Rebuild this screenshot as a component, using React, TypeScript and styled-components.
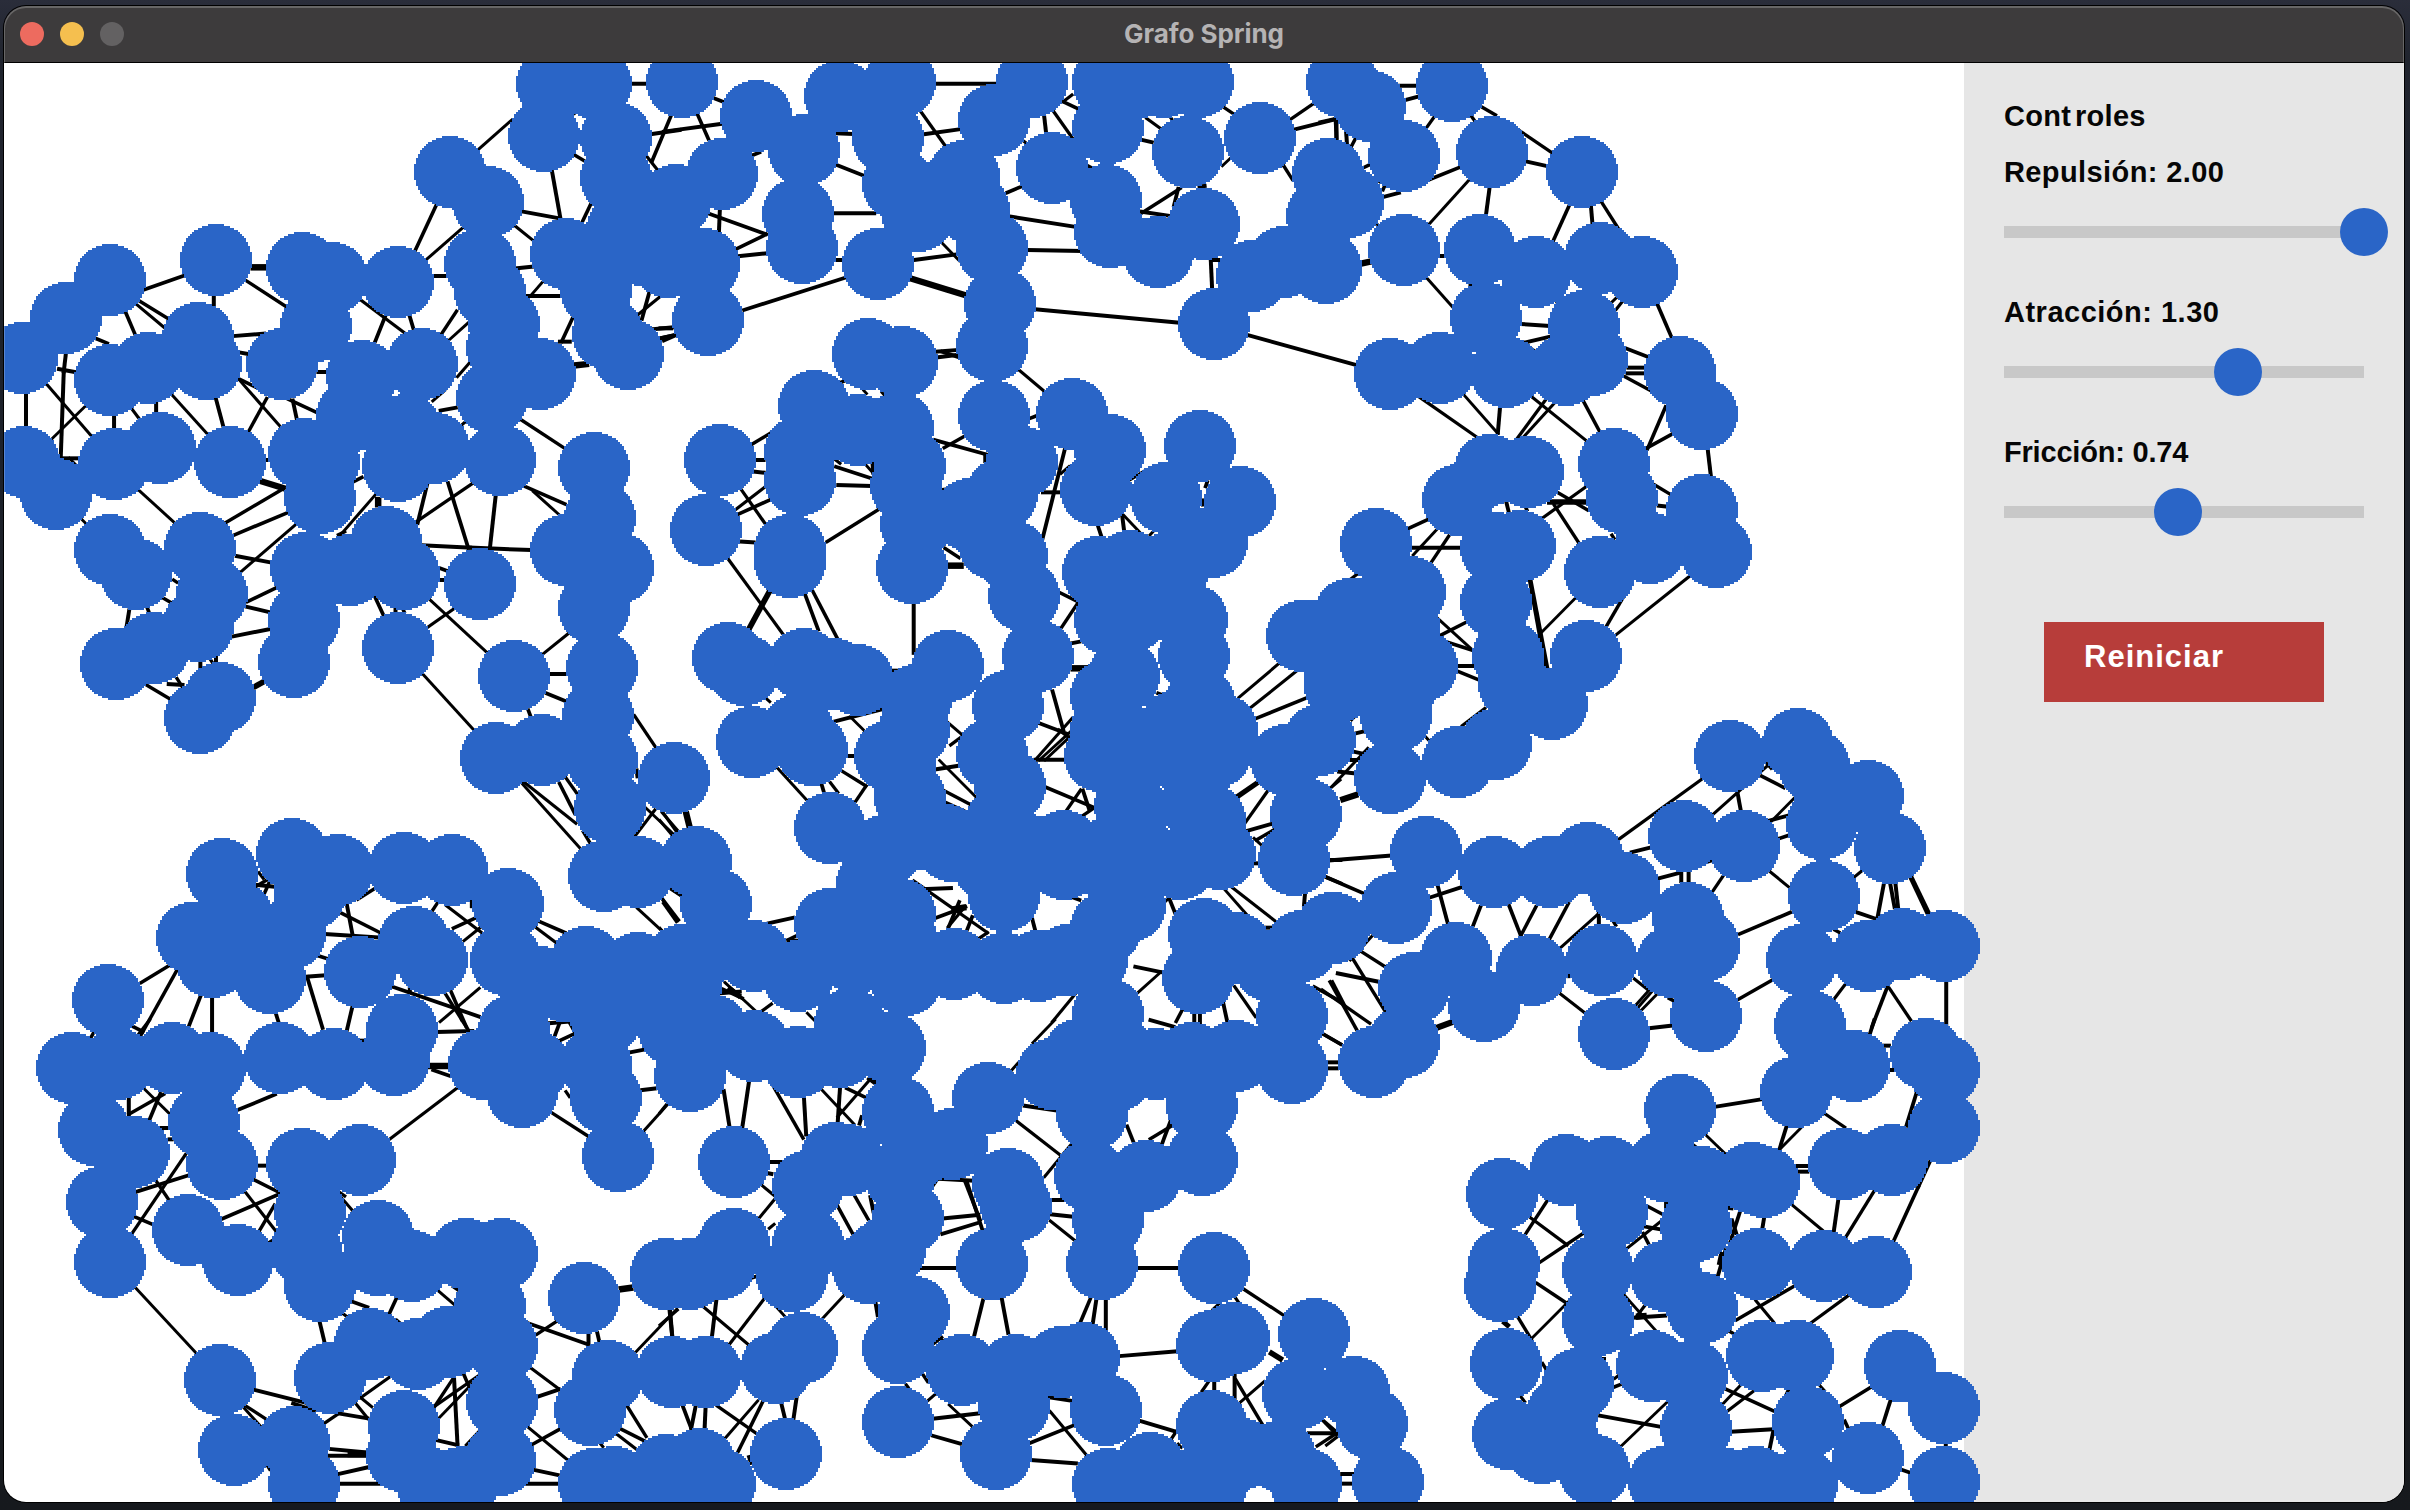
import React from 'react';
import styled, { createGlobalStyle } from 'styled-components';

const BLUE = '#2a65c7';

const GlobalStyle = createGlobalStyle`
  * { box-sizing: border-box; }
  html, body { margin: 0; padding: 0; }
  body {
    width: 2410px;
    height: 1510px;
    overflow: hidden;
    background: #1a1f27;
    font-family: "Liberation Sans", Arial, sans-serif;
  }
`;

const Desktop = styled.div`
  width: 2410px;
  height: 1510px;
  padding: 6px 6px 8px 4px;
  background: linear-gradient(180deg, #2a2d3a 0px, #20242e 60px, #1a1f27 50%, #16191d 100%);
`;

const Window = styled.div`
  position: relative;
  width: 2400px;
  height: 1496px;
  border-radius: 22px;
  overflow: hidden;
  display: flex;
  flex-direction: column;
  box-shadow: 0 0 0 1px #000;

  &::after {
    content: '';
    position: absolute;
    inset: 0;
    border-radius: 22px;
    box-shadow: inset 0 1px 0 1px rgba(255, 255, 255, 0.22);
    pointer-events: none;
    z-index: 3;
  }
`;

const TitleBar = styled.header`
  height: 57px;
  flex: none;
  display: grid;
  grid-template-columns: 200px 1fr 200px;
  align-items: center;
  background: #3d3b3c;
  border-bottom: 1px solid #000;
`;

const Lights = styled.div`
  display: flex;
  gap: 16px;
  padding-left: 16px;
`;

const Light = styled.span<{ $color: string }>`
  width: 24px;
  height: 24px;
  border-radius: 50%;
  background: ${(p) => p.$color};
`;

const Title = styled.h1`
  margin: 0;
  text-align: center;
  font: 700 26px/32px Inter, "Liberation Sans", sans-serif;
  letter-spacing: -0.05px;
  color: #b5b3b4;
  padding-bottom: 1px;
`;

const Body = styled.main`
  display: flex;
  flex: 1;
  min-height: 0;
  overflow: hidden;
  background: #fff;
`;

const Graph = styled.svg`
  display: block;
  position: relative;
  z-index: 2;
  flex: none;
  width: 1960px;
  height: 1439px;
  overflow: visible;
`;

const Panel = styled.aside`
  flex: 1;
  display: flex;
  flex-direction: column;
  align-items: flex-start;
  padding: 33px 0 0 40px;
  background: #e6e6e6;
`;

const Heading = styled.h2`
  margin: 0 0 16px;
  font-size: 29px;
  line-height: 40px;
  font-weight: 700;
  letter-spacing: 0.3px;
  color: #060606;
`;

const Kern = styled.span<{ $after: number }>`
  letter-spacing: ${(p) => p.$after}px;
`;

const Control = styled.div`
  height: 140px;
`;

const Label = styled.div<{ $spacing: number }>`
  font-size: 29px;
  line-height: 40px;
  font-weight: 700;
  letter-spacing: ${(p) => p.$spacing}px;
  color: #060606;
  white-space: pre;
`;

const Slider = styled.div`
  display: flex;
  align-items: center;
  width: 360px;
  height: 48px;
  margin-top: 16px;
  background: linear-gradient(#c8c8c8, #c8c8c8) center / 100% 12px no-repeat;
`;

const Knob = styled.span`
  flex: none;
  width: 48px;
  height: 48px;
  border-radius: 50%;
  background: ${BLUE};
`;

const ResetButton = styled.button`
  display: flex;
  align-items: flex-start;
  width: 280px;
  height: 80px;
  margin: 50px 0 0 40px;
  padding: 17px 0 0 40px;
  border: 0;
  border-radius: 0;
  background: #b73d3a;
  color: #fff;
  font: 700 31px/36px "Liberation Sans", Arial, sans-serif;
  letter-spacing: 1px;
`;

type Sector = { x: number; y: number; nodes: number[]; edges: number[]; bold: number[] };

const UNIT_X = 680 / 1568;
const UNIT_Y = 1 / 3;

// the scene is a 980x720 grid shown at double size
const CELL = 2;
const CELLS_PER_RADIUS = 18;

const sectors: Sector[] = [
  {
    x: 0, y: 50,
    nodes: [
      1273,101, 1374,101, 1254,258, 1422,265, 1421,385, 1432,540, 1305,611, 1540,637, 1374,720, 1400,850, 1448,912,
      1573,95, 1037,365, 1126,455, 1107,640, 1131,728, 1158,895, 1245,972, 1134,1045, 1153,1228, 1371,1253, 1384,1405,
      253,689, 152,803, 53,923, 498,629, 695,653, 765,683, 917,695, 729,827, 650,942, 457,864, 475,942, 340,953,
      255,990, 835,978, 972,942, 813,1100, 1000,1192, 917,1247, 938,1138, 702,1211, 738,1345, 745,1235, 530,1235,
      367,1193, 263,1241, 56,1235, 130,1332, 1480,600, 1160,820,
    ],
    edges: [
      1457,101,1490,101, 1180,210,1100,302, 1318,183,1325,190, 1325,315,1347,332, 1273,365,1292,503, 1206,485,1290,505,
      1187,527,1230,572, 1363,460,1343,515, 1503,252,1568,240, 1548,195,1503,335, 1492,320,1515,358, 1006,465,958,600,
      1070,530,982,630, 1002,678,1028,678, 1190,655,1228,650, 1215,738,1295,738, 1255,690,1225,735, 1320,805,1295,875,
      1290,875,1315,875, 1453,690,1467,680, 1497,728,1480,808, 1522,740,1470,795, 1503,838,1550,832,
      1522,865,1558,855, 1530,872,1555,858, 330,720,422,678, 565,690,660,770, 493,738,493,768, 318,750,388,806,
      312,760,378,832, 290,788,311,852, 220,865,248,880, 540,858,610,851, 152,910,147,965, 147,965,140,1225,
      140,1225,182,1225, 135,957,172,966, 60,1030,60,1130, 108,1003,212,1160, 197,1068,117,1170, 263,1098,263,1135,
      303,1075,322,1108, 360,1060,360,1087, 395,1032,480,1155, 498,1047,515,1130, 552,990,648,1132, 548,985,595,1015,
      615,1045,573,1145, 665,1048,728,1086, 675,1050,684,1105, 555,908,572,912, 733,966,752,966, 830,748,932,848,
      888,800,865,875, 945,800,953,835, 1053,783,1018,852, 1080,818,1033,873, 1083,938,1055,980, 1025,1022,998,1053,
      1015,1082,1052,1073, 1078,1110,1060,1130, 1200,1108,1302,1195, 1208,1308,1303,1362, 1230,1325,1290,1395,
      1143,1337,1130,1490, 1033,1298,1080,1495, 985,1303,963,1420, 1092,1298,960,1415, 815,1295,835,1282,
      865,1335,785,1455, 655,1315,520,1418, 663,1388,540,1455, 683,1422,550,1572, 318,1318,404,1420, 186,1405,203,1427,
      613,1230,620,1230, 160,1225,175,1245,
    ],
    bold: [581,652,612,652, 1327,946,1355,942, 872,1345,872,1368, 600,1293,655,1315],
  },
  {
    x: 660, y: 50,
    nodes: [
      221,197, 332,300, 143,372, 35,450, 100,641, 110,809, 414,140, 553,95, 524,266, 320,490, 327,594, 503,641, 550,400,
      595,499, 860,95, 770,209, 702,377, 725,480, 766,594, 784,761, 766,886, 770,1097, 903,354, 1032,95, 1105,95,
      1160,95, 1240,95, 1034,234, 1217,305, 1384,264, 1028,450, 1038,546, 1150,606, 1254,521, 1277,822, 1365,678,
      1440,635, 1535,653, 1542,372, 1527,500, 1573,95, 480,912, 558,936, 548,1136, 355,1068, 455,1140, 323,1205,
      323,1288, 575,1245, 567,1310, 590,1420, 137,1229, 105,1439, 300,1500, 950,1091, 1038,1200, 1004,1318, 833,1235,
      788,1330, 713,1400, 1245,1187, 1168,1343, 1337,1355, 1274,1475, 1083,1548, 1010,1565, 640,440,
    ],
    edges: [
      125,145,145,155, 8,245,140,222, 87,195,112,268, 215,315,230,307, 408,250,443,252, 408,345,470,377,
      636,101,780,101, 600,182,658,288, 612,252,690,238, 138,480,136,543, 115,492,245,553, 245,553,177,596,
      183,618,245,610, 402,490,495,490, 405,630,420,630, 585,630,685,613, 645,572,690,632, 193,780,427,683,
      800,428,833,410, 835,270,848,283, 886,200,890,245, 908,185,953,268, 930,155,965,177, 950,135,930,155,
      1170,190,1180,207, 1122,205,1157,238, 1112,270,1135,277, 1298,170,1323,192, 1455,207,1508,160, 1465,238,1560,207,
      1558,207,1560,265, 1315,325,1297,347, 1437,345,1458,388, 1243,410,1257,408, 1200,415,1112,488, 1195,415,1185,467,
      1110,485,1172,497, 810,500,955,530, 850,600,970,603, 868,778,1195,818, 1270,630,1273,713, 1272,630,1290,630,
      1355,855,1605,945, 638,905,685,900, 640,922,685,915, 650,905,685,920, 825,957,888,1026, 0,835,27,835,
      0,865,35,855, 415,998,427,992, 470,1022,476,1030, 512,1028,517,1035, 853,1105,867,1098, 213,1182,277,1132,
      222,1230,240,1230, 218,1265,240,1268, 633,1170,752,1213, 703,1158,655,1193, 750,1213,750,1235, 405,1250,487,1285,
      410,1305,485,1308, 475,1245,492,1270, 490,1240,492,1270, 405,1230,415,1240, 650,1320,660,1318, 187,1318,243,1422,
      240,1313,175,1378, 253,1350,180,1393, 502,1380,385,1475, 933,1200,880,1477, 882,1327,925,1327, 943,1250,925,1270,
      1115,1265,1085,1288, 1010,1428,1018,1460, 1065,1390,1105,1445, 1065,1390,1070,1440, 1130,1455,1137,1445,
      1262,1295,1258,1310, 1250,1350,1252,1365, 983,345,993,352,
    ],
    bold: [580,686,703,735],
  },
  {
    x: 1320, y: 50,
    nodes: [
      114,168, 304,107, 194,318, 396,305, 604,365, 65,455, 194,600, 370,600, 497,666, 645,624, 743,666, 383,805,
      609,828, 627,930, 567,960, 427,966, 277,953, 161,972, 830,965, 881,1091, 390,1259, 479,1265, 318,1350, 678,1241,
      696,1345, 881,1379, 912,1506, 128,1481, 460,1488, 405,1492,
    ],
    edges: [
      180,107,221,107, 197,150,225,140, 262,203,244,236, 350,200,357,213, 372,170,405,195, 460,242,535,308,
      478,335,523,348, 320,353,250,390, 345,388,250,525, 391,413,383,492, 0,217,35,207, 38,210,38,270, 60,240,62,280,
      82,265,72,290, 102,352,113,345, 130,388,137,395, 150,405,145,420, 148,440,183,428, 130,520,137,530,
      277,618,288,618, 245,682,305,770, 347,702,347,712, 574,468,538,572, 625,472,628,518, 650,458,690,540,
      545,752,548,760, 690,735,670,760, 697,755,683,778, 778,763,810,860, 466,822,527,828, 470,878,530,860,
      475,885,495,903, 705,895,755,920, 710,953,748,953, 708,970,748,970, 703,980,760,1020, 228,1040,360,1160,
      330,1032,410,1150, 415,1074,410,1150, 485,1037,617,1175, 520,1050,455,1165, 540,1060,470,1160, 608,1055,645,1145,
      797,1070,755,1197, 815,1150,755,1193, 894,1198,901,1275, 772,1305,808,1333, 780,1367,800,1370, 545,1325,617,1380,
      527,1354,613,1354, 527,1358,613,1358, 617,1307,512,1405, 540,1365,600,1485, 430,1358,435,1385, 205,1435,250,1408,
      268,1440,215,1515, 297,1458,255,1540, 673,1455,678,1465, 475,1374,477,1380,
    ],
    bold: [98,640,115,635],
  },
  {
    x: 0, y: 530,
    nodes: [
      1305,60, 1425,115, 1370,235, 1388,412, 1379,560, 1388,688, 1407,835, 1392,1037, 1473,1025, 253,62, 313,132,
      461,53, 891,35, 930,132, 707,113, 805,119, 488,190, 458,288, 355,353, 267,402, 508,503, 461,565, 701,272,
      678,397, 918,354, 1107,162, 1185,438, 1143,684, 1250,660, 1555,744, 512,1031, 673,971, 781,1019, 931,1013,
      1042,1019, 1171,1121, 443,1223, 715,1090, 669,1211, 623,1343, 489,1295, 548,1165, 590,1240, 953,1235, 831,1325,
      998,1288, 925,1499, 1165,1290, 1245,1355, 1353,1295, 1473,1313, 1300,1370, 1440,1390, 1398,1462, 1535,1414,
      248,1409, 1183,1500,
    ],
    edges: [
      545,78,623,97, 570,215,637,173, 568,230,620,246, 538,319,620,298, 400,150,408,157, 375,203,397,220,
      298,240,291,297, 340,235,343,245, 462,396,462,418, 498,380,498,396, 485,388,490,398, 335,463,392,507,
      388,462,422,465, 408,445,420,470, 780,15,795,5, 975,46,1085,53, 1085,53,1222,60, 1015,115,1030,122,
      1015,150,1025,150, 860,188,884,255, 912,238,912,246, 930,240,932,246, 988,205,1125,370, 1048,235,985,293,
      975,432,1094,602, 1313,308,1250,374, 1268,432,1306,432, 1260,490,1303,513, 1218,540,1223,557, 1463,557,1512,652,
      1468,720,1470,740, 1200,755,1340,958, 1205,753,1328,880, 1290,760,1325,850, 1303,740,1333,795, 1345,905,1360,938,
      1510,840,1465,917, 1490,835,1555,915, 1530,850,1560,905, 1470,1135,1545,1225, 1525,1103,1560,1172,
      1545,1075,1568,1095, 1530,1120,1560,1175, 597,1028,607,1045, 592,1065,630,1070, 625,1045,608,1095, 592,1068,615,1050,
      865,1075,825,1108, 800,1125,813,1215, 788,1150,875,1207, 752,1212,870,1222, 735,1278,752,1285, 708,1340,748,1336,
      708,1340,744,1495, 1008,1120,998,1140, 1030,1128,1118,1215, 1045,1195,1095,1165, 1110,1190,1070,1232,
      1088,1110,1088,1130, 1245,1175,1303,1208, 1233,1190,1282,1238, 325,1358,392,1305, 407,1323,325,1515,
      462,1400,435,1490, 489,1403,489,1505, 636,1450,642,1475, 812,1433,800,1500, 905,1370,1105,1460,
      1105,1375,1015,1475, 1028,1393,1065,1470, 1040,1385,1075,1490, 945,1360,945,1385, 1320,1400,1295,1465,
    ],
    bold: [587,470,608,455],
  },
  {
    x: 660, y: 530,
    nodes: [
      300,60, 300,95, 581,113, 811,80, 840,197, 872,380, 713,-50, 770,40, 157,384, 195,420, 330,402, 400,432, 455,450,
      665,407, 590,508, 213,636, 320,600, 350,660, 390,894, 530,680, 586,600, 555,700, 575,805, 520,960, 660,932,
      802,525, 767,670, 806,765, 785,880, 930,1000, 1030,970, 1110,970, 1200,1000, 1290,970, 1010,125, 1083,109,
      1190,100, 1274,35, 1037,270, 1227,270, 1130,230, 1090,255, 1232,375, 1070,440, 1028,500, 1028,600, 1245,520,
      1296,600, 1190,670, 1280,665, 1015,680, 1080,715, 1085,830, 1236,820, 1120,640, 1240,720,
      793,1098, 755,1000, 918,985, 675,945, 490,1060, 600,910, 553,1150, 392,1180, 680,1303, 560,1230, 450,1282, 470,1180,
      320,1340, 565,1350, 795,1312, 870,1308, 82,996, 127,1120, 215,1278, 130,1250, 50,1290, 0,1370, 60,1370,
      1083,1130, 1030,1195, 1060,1050, 995,1290, 940,1290, 1033,1450, 1240,1343, 1255,1213, 1330,1255, 1405,1310,
      1550,1195, 1480,1250, 1458,1455, 1462,990, 1490,850, 1445,690, 1522,630, 1494,318, 1570,470, 1590,250,
      1190,590, 1270,870, 850,960, 930,950, 1085,900, 1480,320,
    ],
    edges: [
      188,35,217,37, 155,83,285,315, 335,195,365,300, 350,178,410,328, 585,221,585,370, 657,55,690,83, 922,188,965,216,
      965,216,922,300, 948,340,968,335, 537,422,545,422, 242,502,253,515, 400,575,440,562, 440,562,515,537,
      440,562,475,607, 660,573,697,615, 735,582,670,645, 433,678,447,678, 637,718,685,708, 645,692,730,803,
      633,767,715,823, 655,815,710,848, 905,483,930,600, 875,580,940,612, 950,565,870,683, 965,583,875,690,
      970,590,888,690, 865,689,932,689, 920,600,945,625, 268,710,340,813, 418,722,475,768, 475,768,448,820,
      373,765,378,787, 393,758,410,787, 475,876,493,876, 890,772,1005,835, 970,780,913,887, 975,780,990,840,
      1000,835,932,895, 1160,745,1170,780, 1148,490,1163,497, 1435,392,1335,502, 1468,423,1360,535, 1492,503,1375,565,
      1383,757,1318,815, 1380,753,1316,810, 1400,785,1343,890, 1353,903,1410,882, 1375,930,1415,900, 1370,925,1385,943,
      1545,990,1570,990, 1370,1000,1380,1000, 1487,1095,1485,1127, 1537,1042,1570,1060, 1550,770,1568,750,
      1135,885,1150,855, 1148,860,1140,885, 585,1053,755,1208, 590,1078,672,1074, 637,1163,705,1130, 690,1115,665,1193,
      700,1135,665,1190, 720,1160,708,1200, 755,1208,730,1230, 925,1090,968,1110, 955,1050,968,1047, 925,1232,950,1217,
      858,1165,865,1200, 250,1180,308,1163, 295,1230,315,1217, 295,1232,318,1232, 1180,1060,1162,1078,
      1165,1075,1188,1150, 1192,1080,1165,1115, 1095,1310,1155,1326, 1155,1326,1100,1390, 945,1353,970,1375,
      968,1375,905,1475, 1320,1073,1437,1192, 1303,1080,1355,1157, 1390,1193,1437,1193, 150,1358,218,1440,
      135,1390,185,1385, 145,1378,190,1405, 235,1443,257,1422, 340,1450,355,1470, 1325,1370,1373,1460,
      1357,1360,1390,1395, 1298,1415,1308,1475, 1232,1452,1232,1480, 1245,1452,1245,1480, 1205,1438,1190,1475,
      5,848,40,900, 0,872,28,915, 1508,1370,1570,1415, 1550,1355,1580,1430, 25,1075,48,1095, 5,1105,43,1170,
      0,1195,20,1225,
    ],
    bold: [253,183,205,297, 664,107,697,107, 950,415,988,415, 675,1138,703,1132, 60,848,68,890, 160,1375,183,1398],
  },
  {
    x: 1320, y: 530,
    nodes: [
      645,125, 760,53, 208,186, 98,252, 405,215, 434,380, 614,378, 447,460, 535,522, 406,642, 320,696, 161,743,
      174,560, 235,410, 120,340, 195,290, 190,470, 45,450, 20,330, 245,966, 175,1133, 30,1195, 401,1026, 529,1026,
      619,984, 700,1073, 840,918, 979,948, 946,678, 1104,642, 1140,710, 1264,797, 1158,882, 1175,800, 1315,953,
      1162,1097, 1112,1289, 1264,1278, 1342,1241, 1440,1248, 850,1163, 885,1245, 810,1298, 651,1289, 489,1319,
      315,1285, 218,1373, 379,1427, 678,1512, 891,1457, 1130,1488,
    ],
    edges: [
      213,53,322,53, 85,133,73,145, 267,260,350,358, 335,278,275,318, 290,335,350,360, 318,408,352,408,
      320,425,363,448, 484,153,520,412, 486,153,524,412, 590,203,497,325, 700,200,660,290, 853,138,680,317,
      92,365,105,372, 105,365,110,390, 130,440,143,445, 380,535,328,587, 243,620,252,633, 88,550,73,570, 83,610,98,605,
      110,655,25,773, 43,725,80,730, 78,665,95,670, 70,690,95,690, 23,991,162,977, 15,1042,100,1090, 255,1102,325,1072,
      272,1070,294,1177, 370,1130,353,1187, 436,1127,463,1217, 498,1130,463,1217, 573,1120,530,1225, 643,1150,553,1255,
      643,1148,643,1183, 678,1178,682,1186, 690,927,883,745, 718,967,760,953, 1038,700,903,857, 1018,738,1070,773,
      1030,700,1040,715, 963,790,970,840, 1093,805,1040,875, 1035,872,1078,857, 1060,925,1078,917, 1035,1022,1080,1070,
      1250,1022,1233,1040, 833,1027,833,1055, 850,1027,850,1057, 782,1045,830,1028, 890,997,902,992, 930,1037,905,1085,
      967,1212,1085,1147, 1238,1147,1283,1167, 1300,1063,1285,1167, 1315,1062,1325,1133, 1327,1062,1333,1133,
      1360,1040,1400,1150, 1364,1040,1405,1150, 1187,1200,1197,1207, 965,1408,1043,1350, 1210,1365,1185,1408,
      1313,1355,1273,1490, 1313,1375,1362,1470, 1444,1356,1444,1490, 122,1215,70,1290, 92,1262,150,1310,
      75,1285,150,1443, 40,1330,135,1355, 23,1355,85,1500, 5,1380,115,1480, 550,1387,612,1450, 573,1333,573,1340,
      725,1347,757,1380, 757,1383,725,1430, 765,1385,735,1430, 775,1395,740,1442, 805,1405,815,1412,
    ],
    bold: [50,809,85,794],
  },
  {
    x: 0, y: 1020,
    nodes: [
      167,144, 270,132, 396,114, 482,144, 217,330, 309,396, 471,306, 512,432, 235,545, 254,725, 432,630, 547,720,
      647,114, 770,132, 909,120, 697,432, 830,420, 715,575, 872,648, 872,720, 950,738, 705,690, 738,798, 1076,702,
      1158,702, 1131,860, 1035,965, 1158,980, 965,1001, 855,972, 761,1073, 507,1079, 540,1289, 678,1265, 701,1391,
      932,1218, 927,1305, 1158,1145, 1153,1320, 1068,1385, 995,1391, 1052,1391, 1346,834, 1402,1068, 1360,1170,
      1370,1391, 1415,1385, 1535,1351, 1550,1055, 1536,762, 1117,132, 1205,216, 1230,140, 1375,130, 1397,235,
      1425,409, 1591,168,
    ],
    edges: [
      215,40,210,52, 300,15,330,35, 345,0,318,45, 1010,36,1090,33, 1065,0,1080,30, 1262,10,1310,5, 1280,45,1290,10,
      1310,0,1327,40, 1327,40,1290,62, 1453,97,1568,68, 998,150,1038,168, 1055,203,898,358, 1272,278,1358,350,
      1305,215,1313,230, 1480,210,1512,205, 1540,252,1483,335, 548,270,635,223, 297,238,297,285, 297,283,378,223,
      333,207,390,280, 370,220,345,298, 365,324,388,324, 390,358,397,358, 428,403,303,643, 315,515,432,467,
      360,483,388,537, 310,590,350,612, 595,437,612,437, 587,480,648,520, 648,520,513,596, 565,515,645,648,
      633,555,597,635, 645,648,620,668, 770,505,795,528, 775,515,815,575, 310,800,453,1000, 737,905,748,965,
      813,845,848,862, 790,880,800,890, 914,835,898,880, 915,900,922,908, 1010,812,1047,853, 1045,800,1058,812,
      1218,910,1355,973, 1285,903,1238,943, 1357,942,1357,973, 1377,937,1382,965, 1545,870,1550,947, 1560,868,1463,1000,
      1223,1043,1290,1108, 1290,1108,1240,1130, 1218,1222,1307,1318, 1290,1228,1228,1273, 1232,1350,1287,1365,
      1212,1391,1290,1391, 785,1391,880,1391, 780,1362,848,1342, 757,1307,843,1307, 762,1287,843,1297,
      588,1110,705,1148, 675,1150,725,1172, 563,1155,617,1200, 560,1160,603,1222, 615,1333,622,1348, 900,1070,832,1133,
      832,1133,857,1160, 820,1150,848,1195, 780,1180,848,1195, 782,1180,748,1210, 1045,1075,1003,1158,
      1047,1075,1055,1275, 1070,1065,1080,1095, 1108,1063,1003,1158, 1108,1065,1013,1193, 1005,1260,1055,1275,
      1105,1233,1075,1275, 1447,1160,1490,1250, 1433,1228,1485,1262, 1420,1240,1467,1287, 1385,1272,1390,1280,
      830,62,843,62, 225,216,232,220, 560,118,565,145,
    ],
    bold: [990,138,1033,138, 1430,808,1457,803, 805,1302,843,1302],
  },
  {
    x: 660, y: 1020,
    nodes: [
      218,78, 318,126, 416,96, 531,85, 549,275, 170,426, 407,413, 435,418, 342,498, 672,372, 757,234, 902,162,
      803,492, 820,560, 573,595, 555,470, 600,390, 766,732, 995,280, 992,470, 1120,468, 1250,420, 1250,260, 1145,132,
      1228,114, 1327,108, 1458,144, 1033,600, 1019,732, 1277,744, 340,670, 305,768, 172,672, 137,732, 70,760,
      480,744, 530,690, 510,705, 586,876, 549,985, 549,1205, 696,1049, 820,1049, 925,1025, 978,1015, 816,1155,
      775,1301, 1028,1170, 327,983, 267,1043, 106,1055, 28,1055, 291,1301, 90,1331, 138,1391, 20,1391, 1033,1391,
      1130,1343, 1275,1391, 1180,1391, 1273,1217, 1323,953, 1273,978, 1472,1120, 1430,1310, 1340,1300, 1489,1391,
      1508,942, 1050,170, 30,30, 120,30, 440,10, 1050,90, 970,100,
    ],
    edges: [
      17,250,0,278, 147,212,160,318, 205,187,190,320, 262,200,330,355, 332,234,337,345, 370,205,447,312,
      415,205,410,303, 430,205,473,232, 480,185,410,290, 465,290,460,312, 254,426,280,426, 232,493,262,525,
      265,537,230,592, 250,460,258,462, 252,625,263,613, 408,555,445,643, 450,530,480,598, 485,530,492,575,
      387,742,397,742, 208,775,220,770, 75,833,205,975, 130,840,120,947, 240,837,160,973, 268,860,287,888,
      425,825,375,895, 497,848,502,887, 597,744,685,744, 625,475,722,482, 640,478,620,515, 707,483,743,628,
      703,483,738,600, 655,595,735,585, 650,642,735,608, 822,303,923,405, 950,370,887,470, 840,257,912,271,
      905,540,930,540, 903,583,950,590, 900,603,958,663, 825,130,808,155, 910,0,860,68, 953,8,937,62,
      1130,0,1185,20, 1105,40,1085,68, 1085,195,1065,220, 1098,210,1070,235, 1077,318,1092,367, 1183,315,1130,357,
      1178,300,1158,370, 1530,43,1570,73, 1102,744,1195,744, 745,840,725,945, 788,835,803,940, 992,837,970,905,
      1006,840,998,910, 1028,843,1028,930, 1343,805,1437,885, 1325,830,1333,845, 1290,850,1275,868,
      1062,1008,1190,994, 640,950,655,965, 632,970,650,952, 607,1065,617,1085, 568,1095,572,1102, 635,1122,615,1145,
      667,1155,722,1222, 632,1196,735,1180, 628,1247,693,1271, 952,1217,855,1268, 900,1175,982,1303, 897,1132,947,1142,
      858,1320,960,1330, 1108,1203,1190,1235, 1190,1235,1180,1255, 1195,1272,1202,1282, 1265,1085,1250,1113,
      1278,1085,1278,1110, 1325,1062,1325,1135, 1328,1080,1392,1220, 1393,1085,1335,1150, 1527,1198,1560,1235,
      1495,1240,1560,1240, 53,1160,72,1225, 82,1160,72,1225, 105,1165,103,1222, 132,1158,225,1243, 225,1143,150,1255,
      237,1145,180,1295, 280,1152,288,1195, 315,1132,308,1195, 205,1310,210,1330, 22,870,28,947, 40,870,0,915,
      1560,1240,1515,1278,
    ],
    bold: [482,174,496,188, 1408,998,1433,1018, 1364,1384,1380,1388],
  },
  {
    x: 1320, y: 1020,
    nodes: [
      124,127, 194,66, 1230,138, 1098,216, 1398,102, 1440,147, 1440,324, 1208,432, 1320,420, 830,270, 420,521,
      566,450, 662,456, 795,437, 880,486, 998,474, 1024,486, 673,575, 867,620, 640,748, 640,900, 424,730, 415,798,
      429,1031, 433,1241, 800,768, 880,864, 1010,732, 1162,738, 1281,756, 1020,1008, 1102,1008, 765,1038, 857,1065,
      594,1090, 560,1180, 512,1283, 632,1349, 560,1250, 867,1225, 795,1385, 870,1370, 935,1391, 1005,1385, 1110,1391,
      1126,1205, 1264,1313, 1337,1038, 1440,1163, 1440,1385, 78,1115, 120,1210, 157,1388,
    ],
    edges: [
      8,43,48,73, 20,127,40,127, 20,145,40,145, 762,24,810,17, 1278,0,1268,42, 1293,77,1313,77, 1313,150,1325,150,
      913,260,1017,238, 1163,280,1210,322, 1076,318,1060,385, 1108,325,1060,388, 1377,212,1352,318, 888,343,935,402,
      860,374,866,380, 1100,438,1125,438, 1103,455,1125,455, 1195,540,1185,632, 1278,513,1212,652, 1407,423,1380,500,
      1380,500,1323,662, 1087,553,1158,630, 1024,594,1020,625, 525,540,475,640, 482,590,570,675, 607,640,507,727,
      500,790,567,848, 588,825,487,957, 457,893,487,957, 513,1030,520,1045, 463,1130,472,1145, 757,560,790,583,
      798,545,798,580, 790,600,710,683, 745,640,757,670, 750,620,785,628, 938,563,950,565, 968,577,945,670,
      950,600,960,640, 935,690,918,765, 925,700,920,730, 698,820,773,930, 723,893,797,887, 750,855,728,893,
      1095,797,960,900, 1005,842,1045,905, 1220,825,1133,908, 943,933,955,942, 650,1017,656,1017, 690,1065,680,1075,
      680,1100,692,1094, 645,1187,783,1220, 803,1143,693,1280, 935,1107,1045,1172, 970,1095,923,1160, 998,1115,935,1178,
      950,1235,1042,1228, 1045,1235,1037,1285, 1080,1110,1075,1125, 1150,1093,1163,1112, 1270,1102,1200,1158,
      1315,1143,1298,1213, 1210,1203,1217,1222, 1443,1270,1443,1278, 1343,1350,1358,1357, 50,1362,75,1362,
      50,1391,75,1391, 5,1200,38,1245, 15,1275,38,1252,
    ],
    bold: [272,22,303,7, 424,907,434,918, 732,890,750,888],
  },
];

const chunk = (list: number[], size: number): number[][] =>
  Array.from({ length: Math.floor(list.length / size) }, (_, i) => list.slice(i * size, i * size + size));

const toEdges = (s: Sector, list: number[], weight: number) =>
  chunk(list, 4).map(([a, b, c, d]) => {
    const x1 = s.x + a * UNIT_X;
    const y1 = s.y + b * UNIT_Y;
    const x2 = s.x + c * UNIT_X;
    const y2 = s.y + d * UNIT_Y;
    const dx = x2 - x1;
    const dy = y2 - y1;
    const len = Math.hypot(dx, dy) || 1;
    const ex = (dx / len) * 1.5;
    const ey = (dy / len) * 1.5;
    // strokes are measured along the minor axis, so diagonals come out thinner
    const width = (weight * Math.max(Math.abs(dx), Math.abs(dy))) / len;
    return { x1: x1 - ex, y1: y1 - ey, x2: x2 + ex, y2: y2 + ey, width };
  });

// snaps to the scene grid, whose origin is the graph's top left corner
const snap = (v: number, origin: number) => origin + Math.round((v - origin) / CELL) * CELL;

const edges = sectors.flatMap((s) => [...toEdges(s, s.edges, 4), ...toEdges(s, s.bold, 6.5)]);
const nodes = sectors.flatMap((s) =>
  chunk(s.nodes, 2).map(([a, b]) => [snap(s.x + a * UNIT_X, 4), snap(s.y + b * UNIT_Y, 64)]),
);

// disc outline stepped cell by cell
const discPath = (() => {
  const r = CELLS_PER_RADIUS;
  const right: string[] = [];
  const left: string[] = [];
  for (let row = -r; row < r; row += 1) {
    const half = Math.round(Math.sqrt(r * r - (row + 0.5) ** 2)) * CELL;
    const top = row * CELL;
    right.push(`${half},${top} ${half},${top + CELL}`);
    left.unshift(`${-half},${top + CELL} ${-half},${top}`);
  }
  return `M${right.join(' L')} L${left.join(' L')} Z`;
})();

const SpringGraph = () => (
  <Graph viewBox="4 63 1960 1439">
    <g stroke="#000">
      {edges.map((e, i) => (
        <line key={i} x1={e.x1} y1={e.y1} x2={e.x2} y2={e.y2} strokeWidth={e.width} />
      ))}
    </g>
    <g fill={BLUE}>
      {nodes.map(([cx, cy], i) => (
        <path key={i} d={discPath} transform={`translate(${cx} ${cy})`} />
      ))}
    </g>
  </Graph>
);

const controls = [
  { label: 'Repulsión: 2.00', offset: 360, spacing: 0.4 },
  { label: 'Atracción: 1.30', offset: 234, spacing: 0.5 },
  { label: 'Fricción: 0.74', offset: 174, spacing: -0.2 },
];

export default function App() {
  return (
    <>
      <GlobalStyle />
      <Desktop>
        <Window>
          <TitleBar>
            <Lights>
              <Light $color="#ed6b5f" />
              <Light $color="#f5bf4f" />
              <Light $color="#636162" />
            </Lights>
            <Title>Grafo Spring</Title>
          </TitleBar>
          <Body>
            <SpringGraph />
            <Panel>
              <Heading>
                Con<Kern $after={4}>t</Kern>roles
              </Heading>
              {controls.map((c) => (
                <Control key={c.label}>
                  <Label $spacing={c.spacing}>{c.label}</Label>
                  <Slider>
                    <Knob style={{ marginLeft: c.offset - 24 }} />
                  </Slider>
                </Control>
              ))}
              <ResetButton>Reiniciar</ResetButton>
            </Panel>
          </Body>
        </Window>
      </Desktop>
    </>
  );
}
